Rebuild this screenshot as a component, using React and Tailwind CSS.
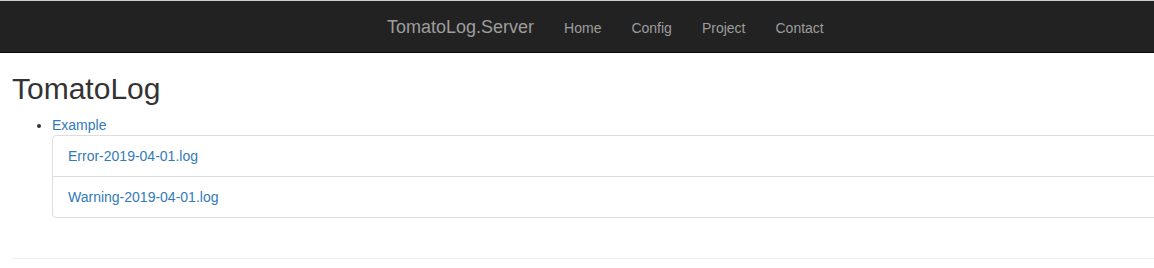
export default function App() {
  const links = ['Home', 'Config', 'Project', 'Contact'];
  const logs = ['Error-2019-04-01.log', 'Warning-2019-04-01.log'];

  return (
    <div className="w-[1154px] h-[268px] overflow-hidden bg-white font-['Liberation_Sans',Arial,sans-serif] text-[14px] leading-[20px] text-[#333]">
      {/* Navbar */}
      <div className="border-t border-t-[#cfcfcf] border-b border-b-[#080808] bg-[#222]">
        <div className="flex h-[51px] items-center pl-[372px]">
          <a className="px-[15px] text-[18px] leading-[20px] text-[#9d9d9d]">TomatoLog.Server</a>
          {links.map((link) => (
            <a key={link} className="px-[15px] pt-[2px] text-[14px] leading-[20px] text-[#9d9d9d]">
              {link}
            </a>
          ))}
        </div>
      </div>

      {/* Body */}
      <div className="w-[1200px] pl-[12px]">
        <h2 className="mt-[19px] mb-[10px] text-[30px] leading-[33px] font-normal text-[#333]">TomatoLog</h2>
        <ul className="list-disc pl-[40px]">
          <li>
            <a className="text-[#337ab7]">Example</a>
            <div className="rounded-[4px] border border-[#ddd]">
              {logs.map((log, index) => (
                <div
                  key={log}
                  className={`px-[15px] py-[10px] ${index > 0 ? 'border-t border-[#ddd]' : ''}`}
                >
                  <a className="text-[#337ab7]">{log}</a>
                </div>
              ))}
            </div>
          </li>
        </ul>
        <hr className="mt-[40px] border-t border-[#eee]" />
      </div>
    </div>
  );
}
